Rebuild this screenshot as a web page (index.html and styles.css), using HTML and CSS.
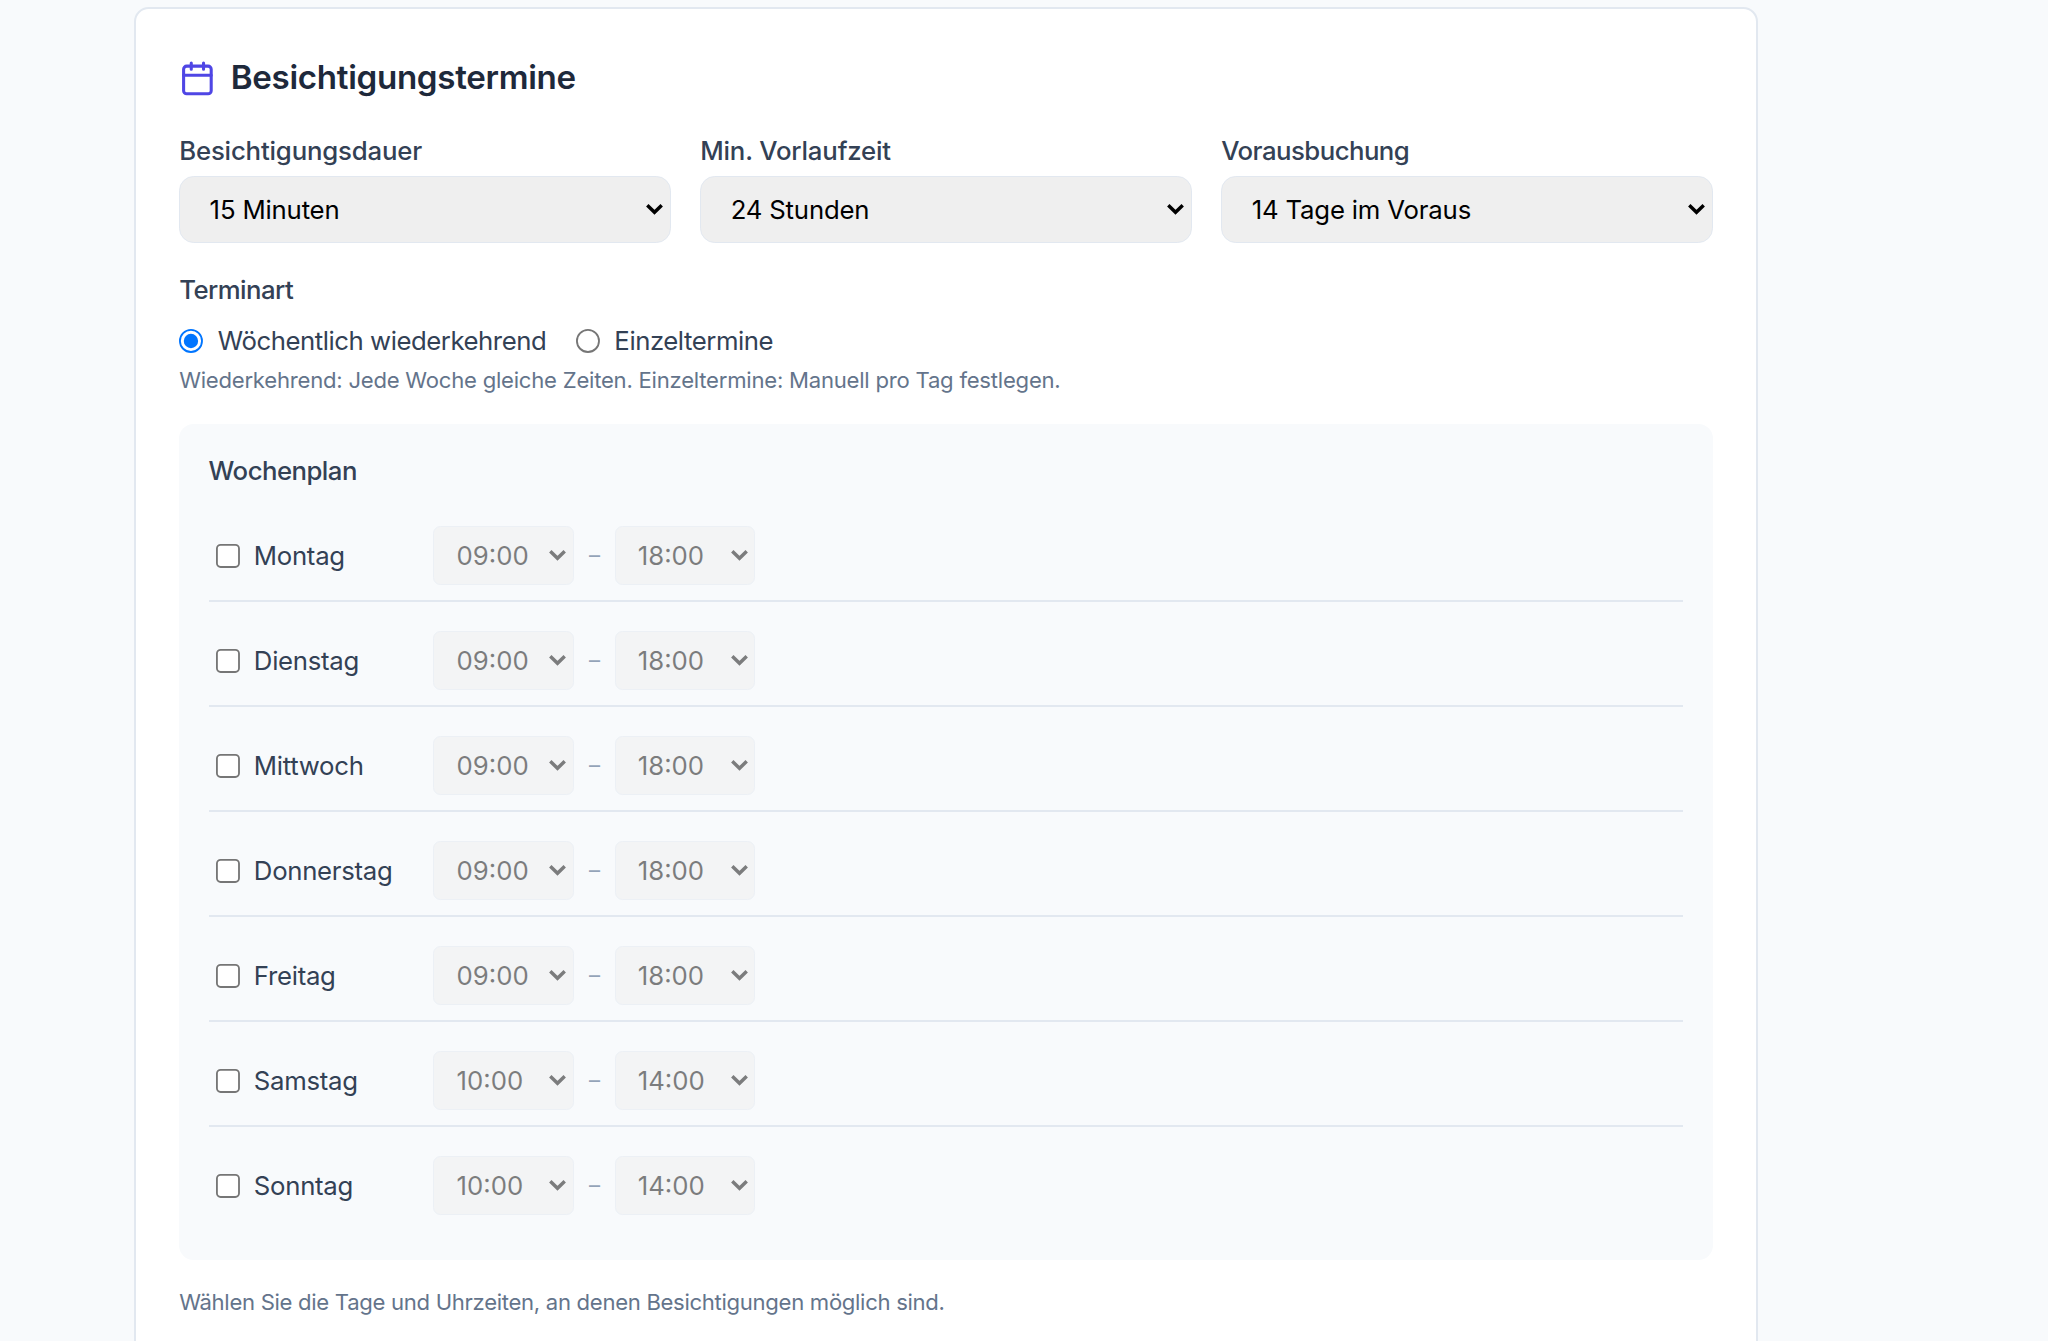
FILE: index.html
```
<!DOCTYPE html>
<html lang="de">
<head>
    <meta charset="UTF-8">
    <title>Besichtigungstermine</title>
    <link rel="stylesheet" href="styles.css">
</head>
<body>
    <form class="card">
        <h2 class="card-title">
            <svg class="icon" viewBox="0 0 24 24" fill="none" stroke="currentColor" stroke-width="2" stroke-linecap="round" stroke-linejoin="round">
                <rect x="3" y="4" width="18" height="18" rx="2"></rect>
                <path d="M16 2v4M8 2v4M3 10h18"></path>
            </svg>
            Besichtigungstermine
        </h2>

        <div class="form-grid">
            <div class="form-group">
                <label for="duration">Besichtigungsdauer</label>
                <select id="duration" name="duration">
                    <option>15 Minuten</option>
                </select>
            </div>
            <div class="form-group">
                <label for="leadTime">Min. Vorlaufzeit</label>
                <select id="leadTime" name="leadTime">
                    <option>24 Stunden</option>
                </select>
            </div>
            <div class="form-group">
                <label for="advance">Vorausbuchung</label>
                <select id="advance" name="advance">
                    <option>14 Tage im Voraus</option>
                </select>
            </div>
        </div>

        <div class="type-group">
            <div class="group-label">Terminart</div>
            <div class="radio-row">
                <label class="radio"><input type="radio" name="type" value="weekly" checked>Wöchentlich wiederkehrend</label>
                <label class="radio"><input type="radio" name="type" value="single">Einzeltermine</label>
            </div>
            <p class="hint">Wiederkehrend: Jede Woche gleiche Zeiten. Einzeltermine: Manuell pro Tag festlegen.</p>
        </div>

        <div class="schedule">
            <div class="group-label">Wochenplan</div>
            <div class="days">
                <div class="day-row">
                    <label class="day"><input type="checkbox" name="days"><span>Montag</span></label>
                    <select class="time" disabled><option>09:00</option></select>
                    <span class="dash">–</span>
                    <select class="time" disabled><option>18:00</option></select>
                </div>
                <div class="day-row">
                    <label class="day"><input type="checkbox" name="days"><span>Dienstag</span></label>
                    <select class="time" disabled><option>09:00</option></select>
                    <span class="dash">–</span>
                    <select class="time" disabled><option>18:00</option></select>
                </div>
                <div class="day-row">
                    <label class="day"><input type="checkbox" name="days"><span>Mittwoch</span></label>
                    <select class="time" disabled><option>09:00</option></select>
                    <span class="dash">–</span>
                    <select class="time" disabled><option>18:00</option></select>
                </div>
                <div class="day-row">
                    <label class="day"><input type="checkbox" name="days"><span>Donnerstag</span></label>
                    <select class="time" disabled><option>09:00</option></select>
                    <span class="dash">–</span>
                    <select class="time" disabled><option>18:00</option></select>
                </div>
                <div class="day-row">
                    <label class="day"><input type="checkbox" name="days"><span>Freitag</span></label>
                    <select class="time" disabled><option>09:00</option></select>
                    <span class="dash">–</span>
                    <select class="time" disabled><option>18:00</option></select>
                </div>
                <div class="day-row">
                    <label class="day"><input type="checkbox" name="days"><span>Samstag</span></label>
                    <select class="time" disabled><option>10:00</option></select>
                    <span class="dash">–</span>
                    <select class="time" disabled><option>14:00</option></select>
                </div>
                <div class="day-row">
                    <label class="day"><input type="checkbox" name="days"><span>Sonntag</span></label>
                    <select class="time" disabled><option>10:00</option></select>
                    <span class="dash">–</span>
                    <select class="time" disabled><option>14:00</option></select>
                </div>
            </div>
        </div>

        <p class="hint hint-bottom">Wählen Sie die Tage und Uhrzeiten, an denen Besichtigungen möglich sind.</p>
    </form>
</body>
</html>
```
FILE: styles.css
```
html {
    background-color: #f8fafc;
    overflow: hidden;
}

body {
    zoom: 1.84;
    margin: 0;
    padding: 3.9px 0 0 73px;
    font-family: Inter, sans-serif;
    font-size: 14px;
    line-height: 1.5;
    color: #334155;
}

.card {
    box-sizing: border-box;
    width: 882.6px;
    height: 750px;
    padding: 24px 23.6px 24px 23.3px;
    background-color: #fff;
    border: 1.1px solid #e2e8f0;
    border-radius: 8px;
}

.card-title {
    display: flex;
    align-items: center;
    gap: 8px;
    margin: 0 0 15.5px;
    font-size: 18px;
    font-weight: 600;
    letter-spacing: -0.16px;
    color: #1e293b;
}

.icon {
    width: 20px;
    height: 20px;
    color: #4f46e5;
}

.form-grid {
    display: grid;
    grid-template-columns: repeat(3, 1fr);
    gap: 16px;
    margin-bottom: 15.2px;
}

.form-group {
    display: flex;
    flex-direction: column;
    gap: 3.1px;
}

.form-group label,
.group-label {
    font-weight: 500;
    letter-spacing: -0.09px;
}

.form-group:last-child label,
.group-label {
    letter-spacing: -0.29px;
}

select {
    appearance: none;
    box-sizing: border-box;
    height: 36.5px;
    padding: 0 16px;
    font-family: inherit;
    font-size: 14px;
    letter-spacing: -0.1px;
    color: #000;
    background: #efefef url("data:image/svg+xml,%3Csvg xmlns='http://www.w3.org/2000/svg' viewBox='0 0 9.3 5.9'%3E%3Cpath d='M.7 .7 4.65 4.5 8.6 .7' fill='none' stroke='%23000' stroke-width='1.9'/%3E%3C/svg%3E") no-repeat right 3.6px center / 9.3px 5.9px;
    border: 1px solid #e2e8f0;
    border-radius: 8px;
}

.type-group {
    margin-bottom: 14.8px;
}

.radio-row {
    display: flex;
    gap: 16px;
    margin: 6.7px 0 1.8px;
    letter-spacing: -0.25px;
}

.radio {
    display: flex;
    align-items: center;
    gap: 8px;
}

.radio input {
    margin: 0;
}

.hint {
    margin: 0;
    font-size: 12px;
    letter-spacing: -0.12px;
    color: #64748b;
}

.hint-bottom {
    letter-spacing: -0.16px;
}

.schedule {
    padding: 15.1px 16px 16.4px;
    margin-bottom: 14.1px;
    background-color: #f8fafc;
    border-radius: 8px;
}

.days {
    display: flex;
    flex-direction: column;
    gap: 8px;
    margin-top: 11.3px;
}

.day-row {
    display: flex;
    align-items: center;
    gap: 8px;
    padding: 8px 0;
    border-bottom: 1.1px solid #e2e8f0;
}

.day-row:last-child {
    border-bottom: none;
}

.day {
    display: flex;
    align-items: center;
    width: 114.2px;
    letter-spacing: -0.16px;
}

.day input {
    margin: 0 7.6px 0 4px;
}

.day span {
    padding-top: 0.8px;
}

.time {
    width: 76.5px;
    height: 32px;
    padding: 0 12px;
    letter-spacing: 0;
    border-radius: 4px;
}

.time:disabled {
    color: #000;
    opacity: 0.5;
}

.dash {
    width: 6px;
    font-size: 12px;
    color: #94a3b8;
}
```
